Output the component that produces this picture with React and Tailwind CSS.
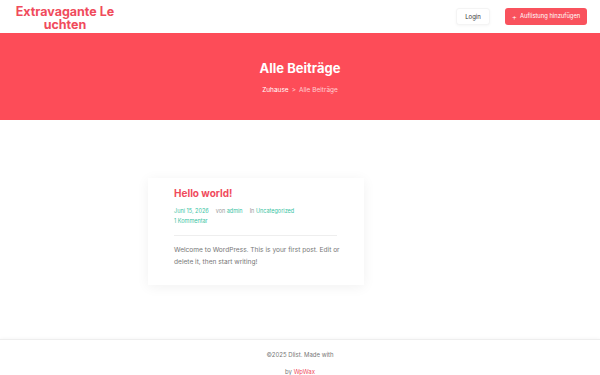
export default function App() {
  return (
    <div className="w-[600px] h-[375px] overflow-hidden bg-white flex flex-col" style={{ fontFamily: "Inter, 'Noto Sans', sans-serif" }}>
      {/* Header */}
      <header className="h-[33px] flex items-center justify-between pl-[3px] pr-[13px] bg-white">
        <div className="w-[124px] pt-[2px] text-center text-[12.5px] leading-[13px] font-bold text-[#f04b5c]">
          Extravagante Le uchten
        </div>
        <div className="flex items-center gap-[15px]">
          <button className="h-[17px] w-[34px] rounded-[3px] bg-white border border-[#f4f4f4] text-[6px] text-[#333] shadow-[0_1px_3px_rgba(0,0,0,0.04)]">
            Login
          </button>
          <button className="h-[17px] w-[82px] justify-center rounded-[3px] bg-[#f9525d] text-[5.8px] text-white flex items-center gap-[3px]">
            <span className="text-[8px] leading-none font-light">+</span>
            Auflistung hinzufügen
          </button>
        </div>
      </header>

      {/* Hero */}
      <section className="h-[87px] bg-[#fd4c58] flex flex-col items-center justify-center">
        <h1 className="text-[13px] font-bold text-white mt-[2px]">Alle Beiträge</h1>
        <div className="mt-[7px] flex items-center gap-[3px] text-[6.5px]">
          <span className="text-white">Zuhause</span>
          <span className="text-[#ffc4c8]">&gt;</span>
          <span className="text-[#ffd0d3]">Alle Beiträge</span>
        </div>
      </section>

      {/* Main */}
      <main className="flex-1 flex pl-[148px] pt-[58px]">
        <article className="w-[216px] h-[107px] bg-white shadow-[0_2px_12px_rgba(0,0,0,0.06)] pl-[26px] pr-[22px] pt-[9px]">
          <h2 className="text-[10px] font-bold text-[#f04b5c] leading-[12px]">Hello world!</h2>
          <div className="mt-[8px] text-[5.5px] leading-[9.5px] text-[#999]">
            <span className="text-[#37c3a3]">Juni 15, 2026</span>
            <span className="ml-[7px]">von </span>
            <span className="text-[#37c3a3]">admin</span>
            <span className="ml-[7px]">In </span>
            <span className="text-[#37c3a3]">Uncategorized</span>
            <div className="text-[#37c3a3]">1 Kommentar</div>
          </div>
          <div className="mt-[9px] w-[163px] border-t border-[#eeeeee]" />
          <p className="mt-[8px] text-[6.6px] leading-[12px] text-[#777]">
            Welcome to WordPress. This is your first post. Edit or delete it, then start writing!
          </p>
        </article>
      </main>

      {/* Footer */}
      <footer className="h-[36px] border-t border-[#eeeeee] shadow-[0_-1px_3px_rgba(0,0,0,0.03)] flex flex-col items-center pt-[10px] text-[6px] text-[#777]">
        <div>©2025 Dlist. Made with</div>
        <div className="mt-[8px]">
          by <span className="text-[#f04b5c]">WpWax</span>
        </div>
      </footer>
    </div>
  );
}
